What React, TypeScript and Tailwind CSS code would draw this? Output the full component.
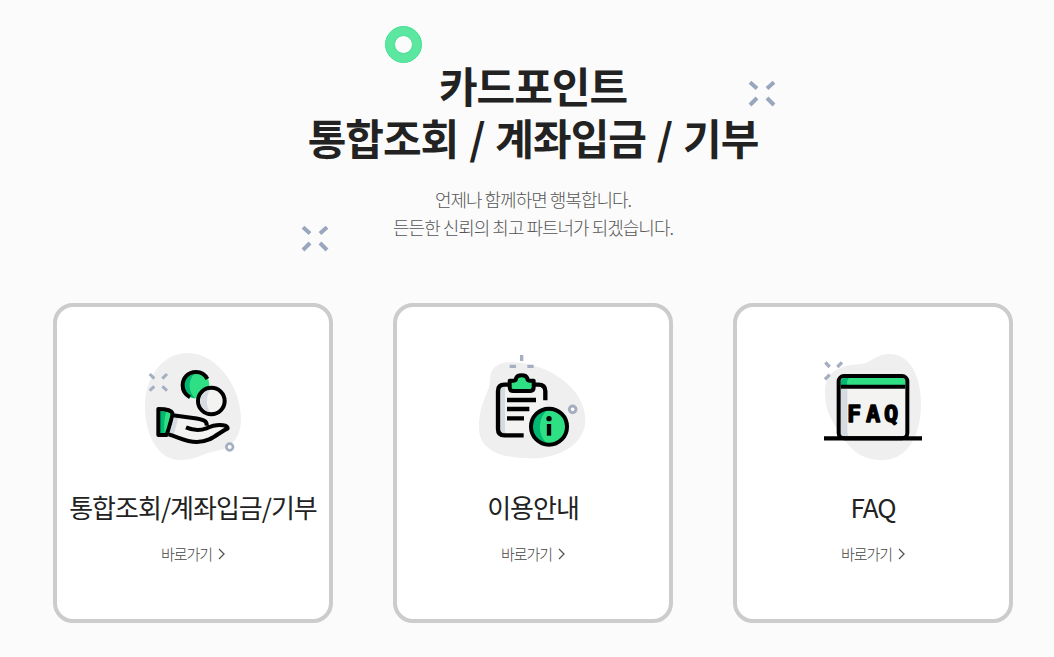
import React from "react";

type CardItem = {
    title: string;
    icon: React.ReactNode;
};

function Spark({ className }: { className: string }) {
    return (
        <svg viewBox="0 0 28 28" className={className} fill="none" stroke="#98a6be" strokeWidth="4">
            <path d="M2 2.2 9 8.4M26 2.2 19 8.4M2 25 9 18M26 25 19 18" />
        </svg>
    );
}

function HandIcon() {
    return (
        <svg viewBox="-6 0 360 360" className="h-[120px] w-[120px]" fill="none">
            <path
                d="M158 24C86 24 30 92 30 184c0 88 40 161 104 161 48 0 73-22 112-28 52-8 72-50 72-96 0-91-70-197-160-197Z"
                fill="#efefef"
            />
            <path
                d="m44 87 14 14M96 87 82 101M44 137l14-13M96 137l-14-13"
                stroke="#a4afc1"
                strokeWidth="9"
            />
            <circle cx="284" cy="306" r="10" fill="#fff" stroke="#a4afc1" strokeWidth="8" />
            <circle cx="183" cy="120" r="40" fill="#2fdf84" />
            <path d="M183 80c-26 0-40 19-40 40 0 22 16 38 37 40-22-24-22-56 3-80Z" fill="#00b871" />
            <path
                d="M217 102C210 88 198 81 183 81c-24 0-40 18-40 40 0 17 9 29 22 36"
                stroke="#000"
                strokeWidth="12"
            />
            <circle cx="229" cy="168" r="40" fill="#f3f3f1" stroke="#000" strokeWidth="12" />
            <path d="M225 135c-18 3-29 17-29 33s10 29 29 34c-12-20-13-45 0-67Z" fill="#d5dbe1" />
            <path
                d="m110 213 68 8c23 3 36 8 33 18l30-3c22-3 38 2 38 16-24 17-48 39-85 39-33 0-58-13-91-28Z"
                fill="#f3f3f1"
            />
            <path d="m118 217 12 3-14 49-12-6Z" fill="#d5dbe1" />
            <path d="M69 191c28 0 42 6 43 16l-17 64H69Z" fill="#2fdf84" />
            <path d="M75 200h18c-5 19-7 42-4 66H75Z" fill="#00b871" />
            <path
                d="M70 192c27 0 40 6 42 12s-7 34-17 66H70Z"
                stroke="#000"
                strokeWidth="12"
                strokeLinejoin="round"
            />
            <path
                d="m113 211 61 8c31 4 43 9 41 23M153 247c18 8 43 10 61 3 20-9 34-12 51-9 8 1 12 4 13 9-31 15-50 41-92 41-34 0-52-13-85-23"
                stroke="#000"
                strokeWidth="12"
                strokeLinejoin="round"
            />
        </svg>
    );
}

function GuideIcon() {
    return (
        <svg viewBox="9 0 360 360" className="h-[120px] w-[120px]" fill="none">
            <path
                d="M121 52c-40 0-61 20-61 49 0 45-33 67-33 147 0 61 55 92 153 92 98 0 166-48 166-116C346 132 236 52 121 52Z"
                fill="#efefef"
            />
            <path d="M155 30v18M119 64h19M172 64h19" stroke="#a4afc1" strokeWidth="10" />
            <circle cx="308" cy="193" r="10" fill="#fff" stroke="#a4afc1" strokeWidth="9" />
            <rect x="83" y="119" width="142" height="152" rx="14" fill="#f3f3f1" />
            <path d="M89 125c0-5 5-7 12-7h14c-9 4-10 9-10 18v116c0 10 3 15 10 18h-14c-8 0-12-4-12-12Z" fill="#d5dbe1" />
            <path
                d="M119 119h-16c-12 0-19 7-19 19v114c0 12 7 19 19 19h58M191 119h14c14 0 21 7 21 20v27"
                stroke="#000"
                strokeWidth="13"
            />
            <path
                d="M119 107h12c5 0 7-2 7-7 2-6 8-9 17-9s15 3 17 9c0 5 2 7 7 7h12v20c0 7-3 11-10 11h-52c-7 0-10-4-10-11Z"
                fill="#2fdf84"
                stroke="#000"
                strokeWidth="12"
                strokeLinejoin="round"
            />
            <path d="M111 165h87M111 192h67M111 220h51" stroke="#000" strokeWidth="13" />
            <circle cx="237" cy="245" r="54" fill="#2fdf84" />
            <path d="M237 191c-32 0-54 25-54 54s22 54 54 54c-34-22-38-82 0-108Z" fill="#00b871" />
            <circle cx="237" cy="245" r="54" stroke="#000" strokeWidth="12" />
            <circle cx="237" cy="221" r="8" fill="#000" />
            <path d="M237 237v35" stroke="#000" strokeWidth="13" />
        </svg>
    );
}

function FaqIcon() {
    return (
        <svg viewBox="0 0 360 360" className="h-[120px] w-[120px]" fill="none">
            <path
                d="M230 27c-48 0-49 28-94 31-59 4-100 24-100 82 0 62 24 92 49 130 30 47 61 75 122 75 76 0 117-72 117-169 0-82-33-149-94-149Z"
                fill="#efefef"
            />
            <path d="m37 52 13 14M87 52 73 66M36 103l14-14" stroke="#a4afc1" strokeWidth="10" />
            <rect x="77" y="93" width="206" height="187" rx="14" fill="#f3f3f1" />
            <path d="M83 131h20v127c0 9 2 13 6 17H83Z" fill="#d5dbe1" />
            <path d="M83 125v-12c0-10 5-14 15-14h165c10 0 14 4 14 14v12Z" fill="#2fdf84" />
            <path d="M83 120v-7c0-10 5-14 15-14h10c-5 4-6 10-6 21Z" fill="#00b871" />
            <path d="M83 125h194" stroke="#000" strokeWidth="12" />
            <rect x="77" y="93" width="206" height="187" rx="16" stroke="#000" strokeWidth="12" />
            <path d="M33 280h294" stroke="#000" strokeWidth="13" />
            <text
                x="102 159 213"
                y="232"
                fontSize="71"
                fill="#000"
                stroke="#000"
                strokeWidth="4"
                strokeLinejoin="round"
                className="font-['DejaVu_Sans_Mono'] font-bold"
            >
                FAQ
            </text>
        </svg>
    );
}

const cards: CardItem[] = [
    { title: "통합조회/계좌입금/기부", icon: <HandIcon /> },
    { title: "이용안내", icon: <GuideIcon /> },
    { title: "FAQ", icon: <FaqIcon /> },
];

function Card({ title, icon }: CardItem) {
    return (
        <a
            href="#"
            className="flex h-[320px] w-[280px] flex-col items-center rounded-[20px] border-4 border-[#ccc] bg-white pt-[38px]"
        >
            {icon}
            <h3 className="mt-[23px] text-[26px] leading-[38px] font-normal tracking-[-1px] whitespace-nowrap text-[#222]">
                {title}
            </h3>
            <span className="mt-[17px] flex items-center gap-[6px] text-[15px] leading-[22px] font-light tracking-[-1px] text-[#444]">
                바로가기
                <svg viewBox="0 0 7 12" className="h-3 w-[7px]" fill="none" stroke="#555" strokeWidth="1.3">
                    <path d="m1 1 5 5-5 5" />
                </svg>
            </span>
        </a>
    );
}

export default function App() {
    return (
        <main className="relative h-[657px] w-[1054px] overflow-hidden bg-[#fbfbfb] pt-[59px] font-['Noto_Sans_CJK_KR',sans-serif]">
            <div className="absolute top-[26px] left-[385px] h-[37px] w-[37px] rounded-full border border-[#43e18f] bg-[#5be79f] p-[8px]">
                <div className="h-full w-full rounded-full border border-[#43e18f] bg-[#fbfbfb]" />
            </div>
            <Spark className="absolute top-[80px] left-[748px] h-7 w-7" />
            <Spark className="absolute top-[225px] left-[301px] h-7 w-7" />

            <header className="pl-[12px] text-center">
                <h2 className="text-[42px] leading-[52px] font-bold tracking-[-1px] text-[#222] [word-spacing:2.4px]">
                    카드포인트
                    <br />
                    통합조회 / 계좌입금 / 기부
                </h2>
                <p className="mt-[22px] text-[18px] leading-[28px] font-light tracking-[-1px] text-[#555]">
                    언제나 함께하면 행복합니다.
                    <br />
                    든든한 신뢰의 최고 파트너가 되겠습니다.
                </p>
            </header>

            <section className="mt-[62px] flex gap-[60px] pl-[53px]">
                {cards.map((card) => (
                    <Card key={card.title} {...card} />
                ))}
            </section>
        </main>
    );
}
